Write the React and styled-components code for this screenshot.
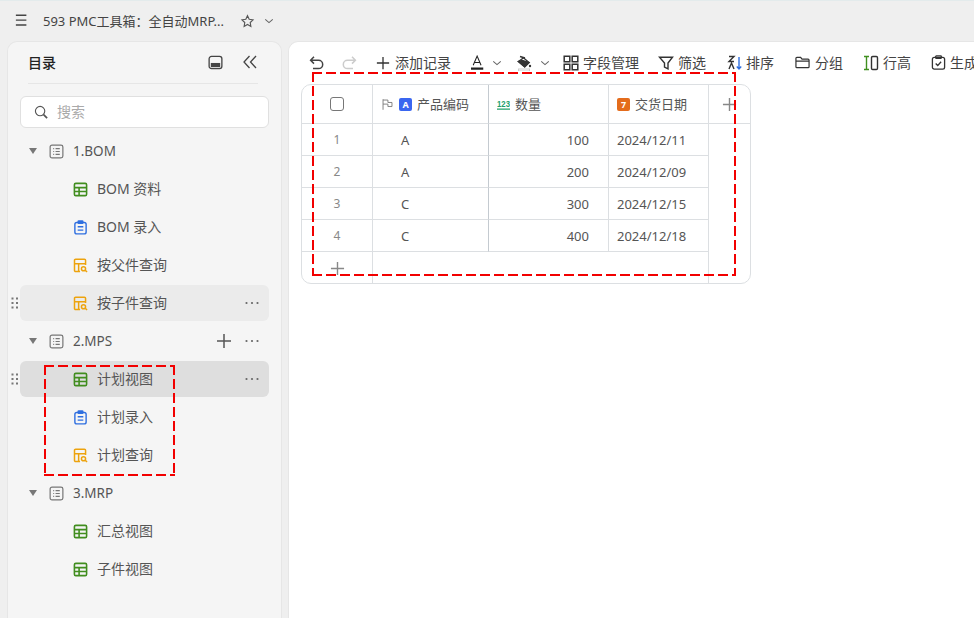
import React from 'react';
import styled, { createGlobalStyle } from 'styled-components';

const Global = createGlobalStyle`
  html, body { margin: 0; padding: 0; height: 100%; overflow: hidden; }
  body { background: #efefef; font-family: "Noto Sans", "Noto Sans CJK SC", sans-serif; color: #444; }
  * { box-sizing: border-box; }
`;

const Page = styled.div`
  position: relative; width: 974px; height: 618px; overflow: hidden;
  display: flex; flex-direction: column; border-top: 1px solid #e3ebec;
`;
const TopBar = styled.header`
  height: 40px; flex: none; display: flex; align-items: center; padding: 0 0 0 15px; font-size: 13px; color: #444;
`;
const Title = styled.span` margin-left: 14px; width: 197px; white-space: nowrap; overflow: hidden; padding-bottom: 2px; `;
const Body = styled.div` flex: 1; display: flex; gap: 6px; padding-left: 7px; min-height: 0; `;
const Sidebar = styled.aside`
  width: 275px; flex: none; background: #f5f5f5; border: 1px solid #e6e6e6; border-bottom: 0;
  border-radius: 10px 10px 0 0; padding: 0 12px; display: flex; flex-direction: column;
`;
const SideHead = styled.div`
  height: 42px; margin: 0 11px 0 8px; border-bottom: 1px solid #e6e6e6; display: flex; align-items: center;
  font-size: 14px; font-weight: 500; color: #222; gap: 19px; padding-bottom: 1px;
  & > span { flex: 1; }
`;
const Search = styled.div`
  margin-top: 12px; height: 32px; background: #fff; border: 1px solid #e0e0e0; border-radius: 6px;
  display: flex; align-items: center; padding-left: 13px; gap: 8px; font-size: 14px; color: #aaa;
  & > span { padding-bottom: 2px; }
`;
const Tree = styled.div` margin-top: 5px; display: flex; flex-direction: column; gap: 2px; `;
const Row = styled.div`
  position: relative; height: 36px; display: flex; align-items: center; border-radius: 6px; font-size: 14px; color: #555;
  padding-left: ${p => (p.$child ? '53px' : '9px')}; padding-right: 9px;
  background: ${p => (p.$active ? '#dedede' : p.$hover ? '#ebebeb' : 'transparent')};
`;
const Arrow = styled.span`
  width: 0; height: 0; border-left: 4px solid transparent; border-right: 4px solid transparent; border-top: 6px solid #777; margin-right: 12px;
`;
const Label = styled.span`
  margin-left: 9px; flex: 1; white-space: nowrap; font-size: ${p => (p.$group ? '13.5px' : '14px')};
  padding-bottom: ${p => (p.$group ? '0' : '2px')};
`;
const Actions = styled.span` display: flex; align-items: center; gap: 12px; `;
const Grip = styled.svg` position: absolute; left: -9px; top: 12px; `;

const Main = styled.main`
  flex: 1; background: #fff; border: 1px solid #e6e6e6; border-right: 0; border-bottom: 0; border-top-left-radius: 10px;
  padding-top: 10px; min-width: 0; overflow: hidden;
`;
const Toolbar = styled.div`
  height: 21px; display: flex; align-items: center; padding-left: 20px; font-size: 14px; color: #444; white-space: nowrap;
`;
const Tool = styled.span`
  display: inline-flex; align-items: center; gap: ${p => p.$gap ?? 4}px; margin-right: ${p => p.$mr ?? 12}px; flex: none;
  & > span { padding-bottom: 2px; }
`;
const Table = styled.div`
  margin: 11px 0 0 12px; width: 450px; height: 200px; border: 1px solid #dcdfe2; border-radius: 10px; overflow: hidden;
  display: grid; grid-template-columns: 71px 116px 120px 100px 41px; grid-template-rows: 39px repeat(5, 32px);
  font-size: 13px;
`;
const Cell = styled.div`
  display: flex; align-items: center; color: ${p => (p.$muted ? '#888' : '#555')};
  border-bottom: ${p => (p.$last ? '0' : '1px solid #dcdfe2')};
  border-right: ${p => (p.$end ? '0' : `1px solid ${p.$strong ? '#c4cad0' : '#dcdfe2'}`)};
  justify-content: ${p => p.$align || 'flex-start'};
  font-size: ${p => (p.$small ? '12px' : '13px')};
  padding: 0 ${p => (p.$number ? '19px' : '8px')} 0 ${p => (p.$indent ? '28px' : '8px')};
  gap: 5px;
  & > span { padding-bottom: 2px; }
`;
const Spacer = styled.div` border-right: 0; `;
const CheckBox = styled.i` display: block; width: 14px; height: 14px; border: 1px solid #777; border-radius: 3px; background: #fff; `;
const Tag = styled.b`
  width: 13px; height: 13px; border-radius: 2px; background: ${p => p.$bg}; color: #fff; font-size: 9px; font-weight: 700;
  display: inline-flex; align-items: center; justify-content: center; line-height: 1;
`;
const dash = 'repeating-linear-gradient';
const Dashed = styled.div`
  position: absolute; pointer-events: none;
  left: ${p => p.$x}px; top: ${p => p.$y}px; width: ${p => p.$w}px; height: ${p => p.$h}px;
  background:
    ${dash}(90deg, #f20000 0 10px, transparent 10px 14px) left top / 100% 2px no-repeat,
    ${dash}(90deg, #f20000 0 10px, transparent 10px 14px) left bottom / 100% 2px no-repeat,
    ${dash}(180deg, #f20000 0 10px, transparent 10px 14px) left top / 2px 100% no-repeat,
    ${dash}(180deg, #f20000 0 10px, transparent 10px 14px) right top / 2px 100% no-repeat;
`;
const Gap = styled.span` width: ${p => p.$w}px; flex: none; `;

const S = ({ s = 16, w = 1.4, c = '#444', children, ...r }) => (
  <svg width={s} height={s} viewBox="0 0 16 16" fill="none" stroke={c} strokeWidth={w} {...r}>{children}</svg>
);
const Plus = ({ s = 16, c = '#555' }) => <S s={s} c={c} w={1.5}><path d="M8 1v14M1 8h14" /></S>;
const Chevron = () => <S s={10} c="#666" w={1.7}><path d="M2 5.5l6 5 6-5" /></S>;
const Dots = () => (
  <svg width="16" height="16" viewBox="0 0 16 16" fill="#666"><circle cx="2.5" cy="8" r="1.1" /><circle cx="8" cy="8" r="1.1" /><circle cx="13.5" cy="8" r="1.1" /></svg>
);
const GripIcon = () => (
  <Grip width="8" height="12" viewBox="0 0 8 12" fill="#777">
    {[1.5, 6, 10.5].flatMap(y => [1.5, 6].map(x => <rect key={x + '-' + y} x={x - 1} y={y - 1} width="2" height="2" />))}
  </Grip>
);
const GridIcon = () => (
  <S s={15} c="#418d1f" w={1.7}><rect x="1.5" y="1.5" width="13" height="13" rx="1.5" /><path d="M1.5 6h13M1.5 10.2h13M6.5 6v8.5" /></S>
);
const FormIcon = () => (
  <S s={15} c="#2f6fe0" w={1.5}><rect x="2" y="2.6" width="12" height="12.2" rx="2" /><rect x="5.5" y="1" width="5" height="2.6" rx=".6" fill="#2f6fe0" /><path d="M5 7.2h6M5 10.8h6" /></S>
);
const QueryIcon = () => (
  <S s={15} c="#eda30e" w={1.6}><path d="M7.5 14.4H2.8a1.2 1.2 0 0 1-1.2-1.2V2.4a1.2 1.2 0 0 1 1.2-1.2h9.4a1.2 1.2 0 0 1 1.2 1.2V7.5M1.6 6h11.8M6 6v8.4" /><circle cx="11.2" cy="11.4" r="2.2" /><path d="M13 13l2 2" /></S>
);
const GroupIcon = () => (
  <S s={15} c="#777" w={1.3}><rect x="1.2" y="1.2" width="13.6" height="13.6" rx="2" /><path d="M4.5 5h1M7 5h4.5M4.5 8h1M7 8h4.5M4.5 11h1M7 11h4.5" /></S>
);

const Item = ({ icon, text, hover, active }) => (
  <Row $child $hover={hover} $active={active}>
    {(hover || active) && <GripIcon />}
    {icon}
    <Label>{text}</Label>
    {(hover || active) && <Dots />}
  </Row>
);
const Group = ({ text, actions }) => (
  <Row>
    <Arrow />
    <GroupIcon />
    <Label $group>{text}</Label>
    {actions && <Actions><Plus s={16} /><Dots /></Actions>}
  </Row>
);

const rows = [
  ['1', 'A', '100', '2024/12/11'],
  ['2', 'A', '200', '2024/12/09'],
  ['3', 'C', '300', '2024/12/15'],
  ['4', 'C', '400', '2024/12/18'],
];

export default function App() {
  return (
    <Page>
      <Global />
      <TopBar>
        <S s={14} c="#444" w={1.7}><path d="M1 1.5h12M1 7h12M1 12.5h12" /></S>
        <Title>593 PMC工具箱：全自动MRP...</Title>
        <S s={15} c="#555" w={1.2}><path d="M8 1.8l1.8 3.8 4.1.6-3 2.9.7 4.1L8 11.2l-3.6 2 .7-4.1-3-2.9 4.1-.6z" /></S>
        <Gap $w={9} />
        <Chevron />
      </TopBar>
      <Body>
        <Sidebar>
          <SideHead>
            <span>目录</span>
            <S s={15} c="#444" w={1.4}><rect x="1.2" y="1.5" width="13.6" height="13" rx="2.5" /><rect x="3" y="8.5" width="10" height="4.5" fill="#444" stroke="none" /></S>
            <S s={16} c="#444" w={1.3}><path d="M7.5 2L2 8l5.5 6M14 2L8.5 8l5.5 6" /></S>
          </SideHead>
          <Search>
            <S s={15} c="#555" w={1.2}><circle cx="6.5" cy="6.5" r="5" /><path d="M10.2 10.2L14 14" strokeWidth="1.8" /></S>
            <span>搜索</span>
          </Search>
          <Tree>
            <Group text="1.BOM" />
            <Item icon={<GridIcon />} text="BOM 资料" />
            <Item icon={<FormIcon />} text="BOM 录入" />
            <Item icon={<QueryIcon />} text="按父件查询" />
            <Item icon={<QueryIcon />} text="按子件查询" hover />
            <Group text="2.MPS" actions />
            <Item icon={<GridIcon />} text="计划视图" active />
            <Item icon={<FormIcon />} text="计划录入" />
            <Item icon={<QueryIcon />} text="计划查询" />
            <Group text="3.MRP" />
            <Item icon={<GridIcon />} text="汇总视图" />
            <Item icon={<GridIcon />} text="子件视图" />
          </Tree>
        </Sidebar>
        <Main>
          <Toolbar>
            <Tool $mr={16}><S s={16} c="#444" w={1.5}><path d="M5 1.8L1.6 5.2 5 8.6M2 5.2h7.5a4.2 4.2 0 0 1 0 8.4H4" /></S></Tool>
            <Tool $mr={19}><S s={16} c="#ccc" w={1.5}><path d="M11 1.8l3.4 3.4L11 8.6M14 5.2H6.5a4.2 4.2 0 0 0 0 8.4H12" /></S></Tool>
            <Tool $mr={20} $gap={5}><Plus s={14} c="#333" /><span>添加记录</span></Tool>
            <Tool $mr={14} $gap={7}>
              <S s={14} c="#222" w={1.2} style={{ overflow: 'visible' }}><path d="M2.5 10.5L7 0l4.5 10.5M4.3 7.4h5.4" /><path d="M0 14.4h14" strokeWidth="2.6" /></S>
              <Chevron />
            </Tool>
            <Tool $mr={13} $gap={8}>
              <S s={16} c="#333" w={1.4}>
                <path d="M4 1.5L9 3" />
                <path d="M2.5 6.5L7.5 2.8l5.5 4.7-4.3 4.3z" fill="none" />
                <path d="M2.5 6.5l4-1 6.5 2-4.3 4.3z" fill="#333" />
                <circle cx="14" cy="11" r="1.2" fill="#333" stroke="none" />
                <rect x="2.5" y="14" width="11" height="2" fill="#fff" stroke="#ccc" strokeWidth="1" />
              </S>
              <Chevron />
            </Tool>
            <Tool $mr={19} $gap={4}><S s={16} c="#333" w={1.5}><path d="M1.2 1.2h5.6v5.6H1.2zM9.2 1.2h5.6v5.6H9.2zM1.2 9.2h5.6v5.6H1.2zM9.2 9.2h5.6v5.6H9.2z" /></S><span>字段管理</span></Tool>
            <Tool $mr={21} $gap={4}><S s={16} c="#333" w={1.4}><path d="M1.5 2.2h13L10 8v5.8L6.5 12V8z" /></S><span>筛选</span></Tool>
            <Tool $mr={21} $gap={3}><S s={16} c="#333" w={1.4}><path d="M2 1.5h5L2 6.5h5" /><path d="M2 14l2.5-6L7 14" /><path d="M12 2v12M9.8 11.5L12 14l2.2-2.5" stroke="#2f6fe0" /></S><span>排序</span></Tool>
            <Tool $mr={20} $gap={5}><S s={15} c="#333" w={1.3}><path d="M1 12.5v-9a1 1 0 0 1 1-1h4l1.5 2H14a1 1 0 0 1 1 1v7a1 1 0 0 1-1 1H2a1 1 0 0 1-1-1zM1 6.5h14" /></S><span>分组</span></Tool>
            <Tool $mr={20} $gap={4}><S s={16} c="#333" w={1.4}><path d="M1 1.5h5M1 14.5h5M3.5 1.5v13" stroke="#3f8f1f" /><rect x="8.5" y="1.5" width="6" height="13" rx="1.2" /></S><span>行高</span></Tool>
            <Tool $gap={4}><S s={15} c="#333" w={1.4}><rect x="1.5" y="2.5" width="13" height="12.5" rx="2" /><rect x="5" y="1" width="6" height="2.6" rx=".6" /><path d="M5 9l2.2 2.2 3.6-4" /></S><span>生成表单</span></Tool>
          </Toolbar>
          <Table>
            <Cell $align="center"><CheckBox /></Cell>
            <Cell $strong>
              <S s={13} c="#777" w={1.1}><path d="M2.5 1.5v13M2.5 2.5h6v3h5v5h-5v-3h-6" /></S>
              <Tag $bg="#3a66f0">A</Tag>
              <span>产品编码</span>
            </Cell>
            <Cell>
              <svg width="13" height="13" viewBox="0 0 13 13"><text x="0" y="8.5" fontSize="8.5" fontWeight="700" textLength="13" lengthAdjust="spacingAndGlyphs" fill="#22a06b" fontFamily="Liberation Sans">123</text><path d="M0 11.2h13" stroke="#22a06b" strokeWidth="1.3" /></svg>
              <span>数量</span>
            </Cell>
            <Cell>
              <Tag $bg="#e46c1c">7</Tag>
              <span>交货日期</span>
            </Cell>
            <Cell $end $align="center"><Plus s={15} c="#888" /></Cell>
            {rows.map(r => (
              <React.Fragment key={r[0]}>
                <Cell $align="center" $muted $small>{r[0]}</Cell>
                <Cell $strong $indent>{r[1]}</Cell>
                <Cell $align="flex-end" $number>{r[2]}</Cell>
                <Cell>{r[3]}</Cell>
                <Spacer />
              </React.Fragment>
            ))}
            <Cell $align="center" $last><Plus s={15} c="#888" /></Cell>
            <Cell $last style={{ gridColumn: '2 / 5' }} />
            <Cell $end $last />
          </Table>
        </Main>
      </Body>
      <Dashed $x={312} $y={71} $w={424} $h={204} />
      <Dashed $x={44} $y={364} $w={131} $h={111} />
    </Page>
  );
}
